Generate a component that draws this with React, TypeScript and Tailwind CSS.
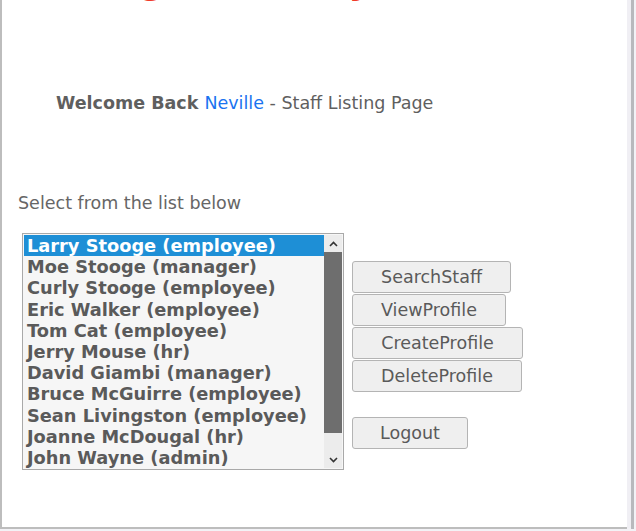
const staff = [
  "Larry Stooge (employee)",
  "Moe Stooge (manager)",
  "Curly Stooge (employee)",
  "Eric Walker (employee)",
  "Tom Cat (employee)",
  "Jerry Mouse (hr)",
  "David Giambi (manager)",
  "Bruce McGuirre (employee)",
  "Sean Livingston (employee)",
  "Joanne McDougal (hr)",
  "John Wayne (admin)",
];

const btn =
  "h-[32px] pt-[2px] rounded-[3px] border border-[#b4b4b4] bg-[#efefef] text-[17.5px] text-[#5a5a5a] leading-none";

export default function App() {
  return (
    <div className="w-[636px] h-[531px] overflow-hidden bg-[#f3f2f6] font-['DejaVu_Sans',sans-serif]">
      <div className="flex h-[531px]">
        <div className="w-[627px] h-[529px] bg-white border-l-2 border-b-2 border-[#bdbdbd] flex flex-col">
          <h1 className="mt-[-38px] h-[41px] pl-[22px] text-[37px] font-bold text-[#f03a2a] leading-[37px] whitespace-nowrap overflow-hidden">
            Listing Directory
          </h1>

          <p className="mt-[90px] pl-[54px] text-[17.5px] text-[#5f5f5f] leading-[21px]">
            <span className="font-bold">Welcome Back </span>
            <span className="text-[#1a73f0]">Neville</span>
            <span> - Staff Listing Page</span>
          </p>

          <p className="mt-[79px] pl-[16px] text-[17.5px] text-[#666] leading-[21px]">
            Select from the list below
          </p>

          <div className="mt-[19px] pl-[20px] flex items-start gap-[8px]">
            <div className="w-[322px] h-[237px] border border-[#a9a9a9] bg-[#f6f6f6] flex p-[1px]">
              <div className="flex-1 flex flex-col">
                {staff.map((s, i) => (
                  <div
                    key={s}
                    className={
                      "h-[21.3px] pl-[3px] text-[17.8px] font-bold leading-[21px] whitespace-nowrap " +
                      (i === 0 ? "bg-[#1e8fd6] text-white" : "text-[#5a5a5a]")
                    }
                  >
                    {s}
                  </div>
                ))}
              </div>
              <div className="w-[18px] flex flex-col bg-[#ececec]">
                <div className="h-[17px] flex items-center justify-center">
                  <svg width="9" height="6" viewBox="0 0 9 6">
                    <path d="M1 5 L4.5 1.5 L8 5" fill="none" stroke="#333" strokeWidth="1.6" />
                  </svg>
                </div>
                <div className="h-[181px] bg-[#6e6e6e]" />
                <div className="flex-1" />
                <div className="h-[17px] flex items-center justify-center">
                  <svg width="9" height="6" viewBox="0 0 9 6">
                    <path d="M1 1 L4.5 4.5 L8 1" fill="none" stroke="#333" strokeWidth="1.6" />
                  </svg>
                </div>
              </div>
            </div>

            <div className="mt-[28px] flex flex-col items-start gap-[1px]">
              <button className={btn + " w-[159px]"}>SearchStaff</button>
              <button className={btn + " w-[154px]"}>ViewProfile</button>
              <button className={btn + " w-[171px]"}>CreateProfile</button>
              <button className={btn + " w-[170px]"}>DeleteProfile</button>
              <button className={btn + " w-[116px] mt-[24px]"}>Logout</button>
            </div>
          </div>
        </div>
        <div className="w-[4px] h-[528px] bg-[#f0eff4]" />
        <div className="w-[3px] h-[529px] bg-[#b9b9bd]" />
      </div>
    </div>
  );
}
